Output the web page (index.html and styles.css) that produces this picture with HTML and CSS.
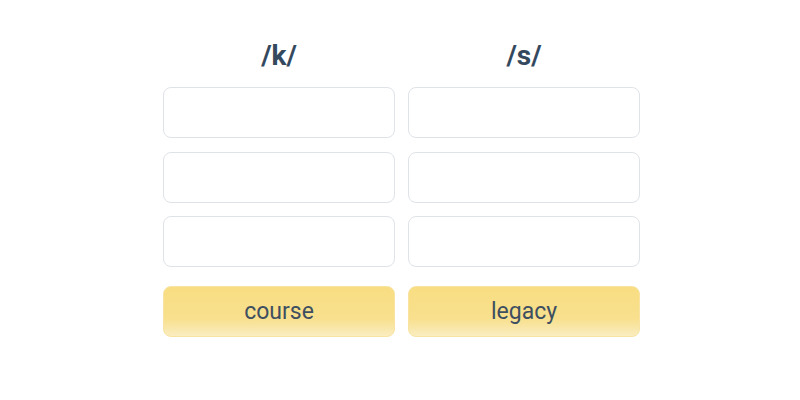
FILE: index.html
```html
<!DOCTYPE html>
<html>
<head>
    <meta charset="utf-8">
    <title>Sort the words</title>
    <link rel="stylesheet" href="styles.css">
</head>
<body>
    <div class="board">
        <div class="column">
            <h2>/k/</h2>
            <div class="slot"></div>
            <div class="slot"></div>
            <div class="slot"></div>
            <button class="word">course</button>
        </div>
        <div class="column">
            <h2>/s/</h2>
            <div class="slot"></div>
            <div class="slot"></div>
            <div class="slot"></div>
            <button class="word">legacy</button>
        </div>
    </div>
</body>
</html>
```

FILE: styles.css
```css
* { box-sizing: border-box; }
html, body { margin: 0; padding: 0; }
body { background: #fff; font-family: Roboto, "Liberation Sans", sans-serif; color: #34495e; }
.board { width: 477px; margin-left: calc(50% - 237px); padding-top: 41px; display: grid; grid-template-columns: 1fr 1fr; gap: 13px; }
.column { display: flex; flex-direction: column; gap: 13.5px; }
h2 { margin: 0 0 2.5px; font-size: 28px; line-height: 30px; font-weight: 700; text-align: center; color: #34495e; }
.slot { height: 51px; border: 1px solid #dfe3e8; border-radius: 8px; background: #fff; }
.word { margin-top: 5.5px; height: 51px; border: 1px solid #f8e3a0; border-radius: 8px; background: linear-gradient(#f8dd82 0%, #f8e08e 65%, #faedc0 100%); font-family: Roboto, "Liberation Sans", sans-serif; font-size: 23px; color: #3e4f61; padding: 0; }
```
